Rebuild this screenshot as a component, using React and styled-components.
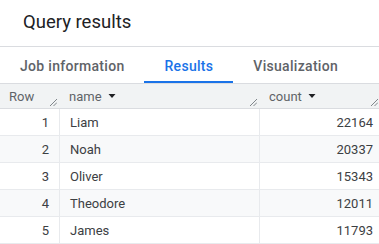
import React from 'react'
import styled, { createGlobalStyle } from 'styled-components'

const GlobalStyle = createGlobalStyle`
  html, body { margin: 0; padding: 0; background: #fff; }
  body { font-family: Roboto, "Liberation Sans", Arial, sans-serif; overflow: hidden; }
`

const rows = [
  { name: 'Liam', count: 22164 },
  { name: 'Noah', count: 20337 },
  { name: 'Oliver', count: 15343 },
  { name: 'Theodore', count: 12011 },
  { name: 'James', count: 11793 },
]

const tabs = ['Job information', 'Results', 'Visualization']

function SortArrow() {
  return (
    <svg width="8" height="8" viewBox="0 0 8 8">
      <path d="M0.5 2 L7.5 2 L4 6 Z" fill="#202124" />
    </svg>
  )
}

function ResizeHandle({ edge }) {
  return (
    <Handle edge={edge} width="8" height="8" viewBox="0 0 8 8">
      <path d="M1 8 L8 1 M4.5 8 L8 4.5" stroke="#80868b" strokeWidth="1" />
    </Handle>
  )
}

export default function App() {
  return (
    <Page>
      <GlobalStyle />
      <Title>Query results</Title>
      <TabBar>
        {tabs.map((t) => (
          <Tab key={t} active={t === 'Results'}>{t}</Tab>
        ))}
      </TabBar>
      <Grid>
        <HeadCell>
          Row
          <ResizeHandle />
        </HeadCell>
        <HeadCell pad>
          name <SortArrow />
          <ResizeHandle />
        </HeadCell>
        <HeadCell pad>
          count <SortArrow />
          <ResizeHandle edge />
        </HeadCell>
        {rows.map((r, i) => (
          <React.Fragment key={r.name}>
            <Cell striped={i % 2 === 1} align="right">{i + 1}</Cell>
            <Cell striped={i % 2 === 1} divided>{r.name}</Cell>
            <Cell striped={i % 2 === 1} divided align="right" last>{r.count}</Cell>
          </React.Fragment>
        ))}
      </Grid>
    </Page>
  )
}

const Page = styled.div`
  width: 379px;
  height: 244px;
  overflow: hidden;
`

const Title = styled.div`
  height: 47px;
  box-sizing: border-box;
  padding: 11px 0 0 23px;
  font-size: 18.5px;
  color: #202124;
  border-bottom: 1px solid #dadce0;
`

const TabBar = styled.div`
  display: flex;
  height: 36px;
`

const Tab = styled.div`
  display: flex;
  align-items: center;
  justify-content: center;
  box-sizing: border-box;
  padding: 4px 20px 0;
  font-size: 14px;
  font-weight: 500;
  letter-spacing: 0.3px;
  color: ${(p) => (p.active ? '#1a73e8' : '#5f6368')};
  border-bottom: 2px solid ${(p) => (p.active ? '#1a73e8' : 'transparent')};
`

const Grid = styled.div`
  display: grid;
  grid-template-columns: 59px 200px 122px;
  grid-auto-rows: 27px;
  grid-template-rows: 25px;
  width: 381px;
  font-size: 13px;
  border-top: 1px solid #dadce0;
`

const HeadCell = styled.div`
  position: relative;
  display: flex;
  align-items: center;
  gap: 6px;
  padding-left: ${(p) => (p.pad ? '10px' : '9px')};
  background: #f1f3f4;
  color: #5f6368;
  border-bottom: 1px solid #dadce0;
`

const Handle = styled.svg`
  position: absolute;
  right: ${(p) => (p.edge ? '3px' : '2px')};
  bottom: 2px;
`

const Cell = styled.div`
  display: flex;
  align-items: center;
  justify-content: ${(p) => (p.align === 'right' ? 'flex-end' : 'flex-start')};
  padding-right: ${(p) => (p.last ? '8px' : p.align === 'right' ? '10px' : '0')};
  padding-left: ${(p) => (p.divided && p.align !== 'right' ? '10px' : '0')};
  background: ${(p) => (p.striped ? '#f8f9fa' : '#fff')};
  color: #3c4043;
  border-bottom: 1px solid #e8eaed;
  border-left: ${(p) => (p.divided ? '1px solid #e8eaed' : 'none')};
`
